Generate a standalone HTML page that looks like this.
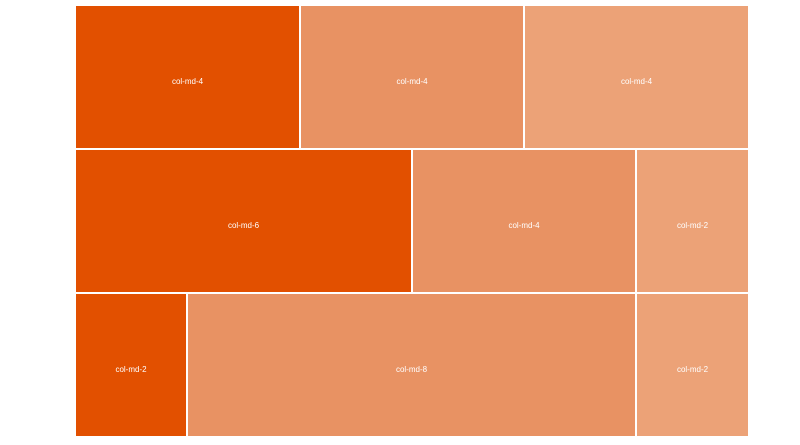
<!DOCTYPE html><html><head><style>
body{margin:0;width:800px;height:445px;background:#fff;position:relative;overflow:hidden;font-family:"Liberation Sans",sans-serif}
div{position:absolute;color:#fff;font-size:8px;display:flex;align-items:center;justify-content:center;box-sizing:border-box;padding-top:8px}
.a{background:#e25000}.b{background:#e89263}.c{background:#eca277}
</style></head><body>
<div class="a" style="left:76px;top:6px;width:223px;height:142px">col-md-4</div>
<div class="b" style="left:301px;top:6px;width:222px;height:142px">col-md-4</div>
<div class="c" style="left:525px;top:6px;width:223px;height:142px">col-md-4</div>
<div class="a" style="left:76px;top:150px;width:335px;height:142px">col-md-6</div>
<div class="b" style="left:413px;top:150px;width:222px;height:142px">col-md-4</div>
<div class="c" style="left:637px;top:150px;width:111px;height:142px">col-md-2</div>
<div class="a" style="left:76px;top:294px;width:110px;height:142px">col-md-2</div>
<div class="b" style="left:188px;top:294px;width:447px;height:142px">col-md-8</div>
<div class="c" style="left:637px;top:294px;width:111px;height:142px">col-md-2</div>
</body></html>
